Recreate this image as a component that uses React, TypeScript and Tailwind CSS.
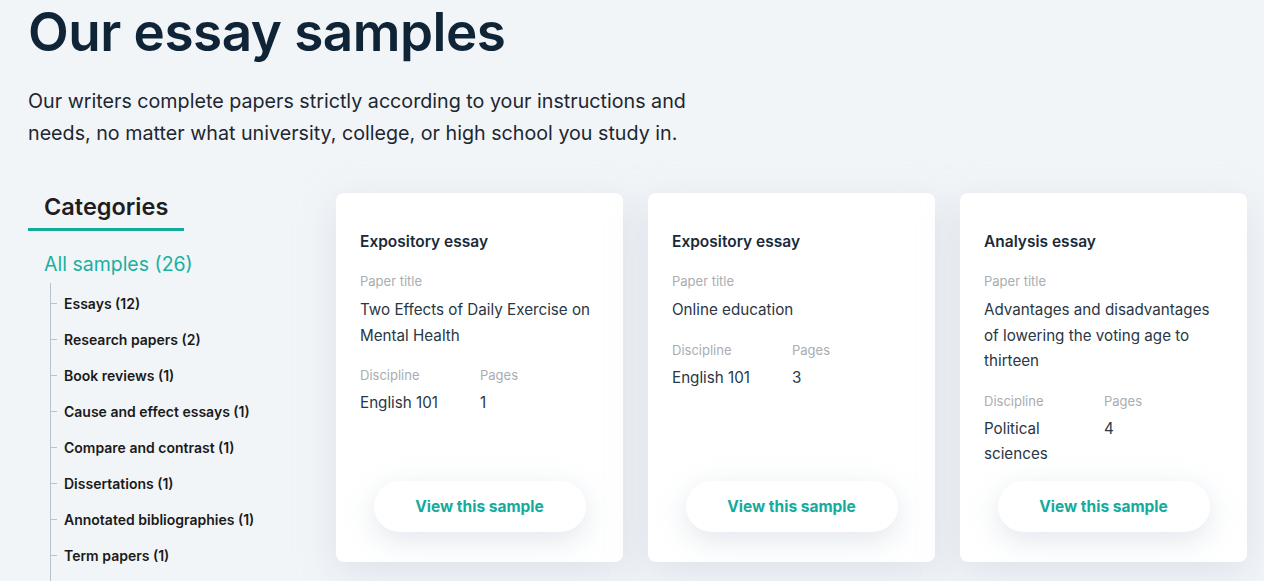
import React from 'react';

interface Sample {
  type: string;
  title: string;
  discipline: string;
  pages: string;
}

const samples: Sample[] = [
  { type: 'Expository essay', title: 'Two Effects of Daily Exercise on Mental Health', discipline: 'English 101', pages: '1' },
  { type: 'Expository essay', title: 'Online education', discipline: 'English 101', pages: '3' },
  { type: 'Analysis essay', title: 'Advantages and disadvantages of lowering the voting age to thirteen', discipline: 'Political sciences', pages: '4' },
];

const categories = [
  'Essays (12)',
  'Research papers (2)',
  'Book reviews (1)',
  'Cause and effect essays (1)',
  'Compare and contrast (1)',
  'Dissertations (1)',
  'Annotated bibliographies (1)',
  'Term papers (1)',
];

const SampleCard: React.FC<{ sample: Sample }> = ({ sample }) => (
  <div className="flex h-[369px] flex-col rounded-lg bg-white px-6 pt-[39px] pb-[30px] shadow-[0_10px_40px_rgba(180,192,210,0.35)]">
    <h3 className="text-[15.5px] leading-[20px] font-semibold text-[#1b2a3a]">{sample.type}</h3>
    <div className="mt-[20px] text-[13px] leading-[18px] text-[#a9adb2]">Paper title</div>
    <p className="mt-[7px] pr-2 text-[15.2px] leading-[25.5px] text-[#2a3744]">{sample.title}</p>
    <div className="mt-[18px] flex">
      <div className="w-[120px] pr-4">
        <div className="text-[13px] leading-[18px] text-[#a9adb2]">Discipline</div>
        <div className="mt-[6px] text-[15.2px] leading-[25px] text-[#2a3744]">{sample.discipline}</div>
      </div>
      <div>
        <div className="text-[13px] leading-[18px] text-[#a9adb2]">Pages</div>
        <div className="mt-[6px] text-[15.2px] leading-[25px] text-[#2a3744]">{sample.pages}</div>
      </div>
    </div>
    <div className="mt-auto flex justify-center">
      <button className="h-[51px] w-[212px] rounded-full bg-white text-[15.5px] font-bold text-[#15ab9c] shadow-[0_8px_30px_rgba(170,182,200,0.35)]">
        View this sample
      </button>
    </div>
  </div>
);

export default function App() {
  return (
    <div className="h-screen overflow-hidden bg-[#f2f5f8] font-['Inter',sans-serif]">
      <div className="pl-7 pr-[17px]">
        <h1 className="text-[53px] leading-[64px] font-semibold tracking-[-0.5px] text-[#0f2437]">
          Our essay samples
        </h1>
        <p className="mt-[21px] max-w-[680px] text-[19.7px] leading-[32px] text-[#1c2731]">
          Our writers complete papers strictly according to your instructions and needs, no matter what university, college, or high school you study in.
        </p>
        <div className="mt-[44px] flex">
          <aside className="w-[308px] shrink-0">
            <div className="inline-block border-b-[3px] border-[#11ab9b] pr-4 pb-[7px] pl-4">
              <h2 className="text-[23.5px] leading-[28px] font-semibold text-[#1e1e1e]">Categories</h2>
            </div>
            <div className="mt-[20px] pl-4 text-[19.5px] leading-[26px] text-[#19b0a0]">All samples (26)</div>
            <ul className="mt-[6px] ml-[22px] border-l border-[#b9c3ce] pt-[2px] pb-10">
              {categories.map((c) => (
                <li key={c} className="flex h-[36px] items-center">
                  <span className="mr-[7px] h-px w-[6px] bg-[#b9c3ce]" />
                  <span className="text-[14px] font-semibold text-[#1a1a1a]">{c}</span>
                </li>
              ))}
            </ul>
          </aside>
          <div className="grid w-[911px] grid-cols-3 gap-[25px] self-start">
            {samples.map((s, i) => (
              <SampleCard key={i} sample={s} />
            ))}
          </div>
        </div>
      </div>
    </div>
  );
}
